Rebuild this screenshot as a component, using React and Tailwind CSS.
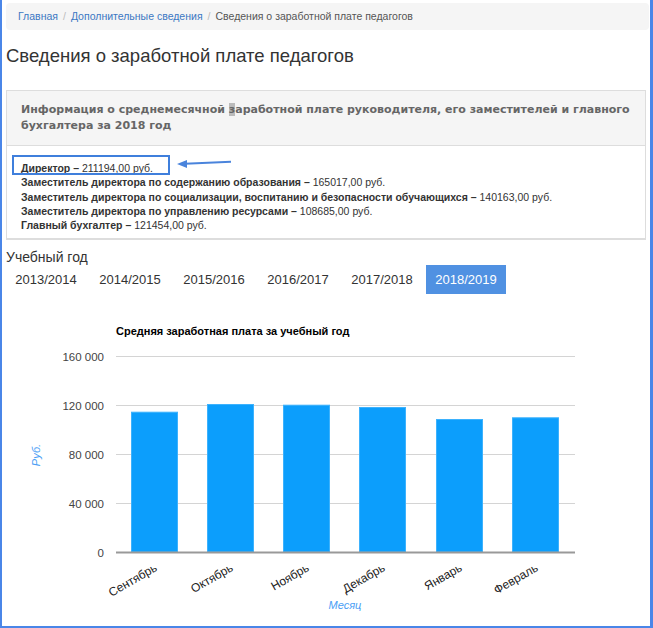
import React from "react";

const staff = [
  ["Директор", "211194,00 руб."],
  ["Заместитель директора по содержанию образования", "165017,00 руб."],
  ["Заместитель директора по социализации, воспитанию и безопасности обучающихся", "140163,00 руб."],
  ["Заместитель директора по управлению ресурсами", "108685,00 руб."],
  ["Главный бухгалтер", "121454,00 руб."],
];

const years = ["2013/2014", "2014/2015", "2015/2016", "2016/2017", "2017/2018", "2018/2019"];

const bars = [
  { month: "Сентябрь", x: 131, top: 411.7 },
  { month: "Октябрь", x: 207, top: 404 },
  { month: "Ноябрь", x: 283, top: 404.7 },
  { month: "Декабрь", x: 359, top: 407 },
  { month: "Январь", x: 436, top: 419 },
  { month: "Февраль", x: 512, top: 417.3 },
];

const ticks = [
  ["160 000", 356.5],
  ["120 000", 405.5],
  ["80 000", 454.5],
  ["40 000", 503.5],
];

function Chart() {
  const font = "'Liberation Sans', Arial, sans-serif";
  return (
    <svg width="648" height="326" viewBox="2 300 648 326" className="block" fontFamily={font}>
      <text x="116" y="335" fontSize="11" fontWeight="bold" fill="#000">
        Средняя заработная плата за учебный год
      </text>
      {ticks.map(([label, y]) => (
        <g key={label}>
          <line x1="116" x2="575" y1={y} y2={y} stroke="#d4d4d4" strokeWidth="1.2" />
          <text x="104" y={y + 4} fontSize="11.5" textAnchor="end" fill="#444">
            {label}
          </text>
        </g>
      ))}
      <text x="104" y="556.5" fontSize="11.5" textAnchor="end" fill="#444">
        0
      </text>
      {bars.map((b) => (
        <rect
          key={b.month}
          x={b.x + 0.5}
          y={b.top + 0.5}
          width="46"
          height={552 - b.top - 0.5}
          fill="#0c9efc"
          stroke="#3db2fd"
          strokeWidth="1"
        />
      ))}
      <line x1="116" x2="575" y1="552.5" y2="552.5" stroke="#999" strokeWidth="2" />
      {bars.map((b) => (
        <text
          key={b.month}
          x={b.x + 27}
          y="570"
          fontSize="12"
          textAnchor="end"
          fill="#222"
          transform={`rotate(-30 ${b.x + 27} 570)`}
        >
          {b.month}
        </text>
      ))}
      <text
        x="40"
        y="455"
        fontSize="11"
        fontStyle="italic"
        textAnchor="middle"
        fill="#4a9ef5"
        transform="rotate(-90 40 455)"
      >
        Руб.
      </text>
      <text x="345" y="609" fontSize="11" fontStyle="italic" textAnchor="middle" fill="#4a9ef5">
        Месяц
      </text>
    </svg>
  );
}

export default function App() {
  return (
    <div
      className="w-[653px] h-[628px] overflow-hidden bg-white border-l-2 border-r-[3px] border-b-2 border-[#4a86e8] text-[#333]"
      style={{ fontFamily: "'Liberation Sans', Arial, sans-serif" }}
    >
      <div className="pl-1 pr-1">
        {/* breadcrumb */}
        <div className="mt-[3px] mr-[-3px] h-[27px] flex items-center px-3 bg-[#f5f5f5] rounded text-[10.5px]">
          <span className="text-[#3c78c3]">Главная</span>
          <span className="px-[5px] text-[#bbb]">/</span>
          <span className="text-[#3c78c3]">Дополнительные сведения</span>
          <span className="px-[5px] text-[#bbb]">/</span>
          <span className="text-[#555]">Сведения о заработной плате педагогов</span>
        </div>

        <h1 className="mt-[14px] mb-[22px] text-[18.5px] leading-[24px] text-[#333]">
          Сведения о заработной плате педагогов
        </h1>

        {/* panel */}
        <div className="border border-[#ddd] border-b-2">
          <div
            className="bg-[#f5f5f5] border-b border-[#ddd] pl-[14px] pr-[4px] pt-[11px] pb-[12px] text-[11px] leading-[15.5px] font-bold text-[#666]"
            style={{ fontFamily: "'DejaVu Sans', Verdana, sans-serif" }}
          >
            Информация о среднемесячной <span className="bg-[#bbb]">з</span>аработной плате руководителя, его
            заместителей и главного бухгалтера за 2018 год
          </div>
          <div className="relative px-[14px] pt-[15px] pb-[6px] text-[10.5px] leading-[14.25px]">
            {staff.map(([role, sum]) => (
              <div key={role}>
                <span className="font-bold">{role} –</span> {sum}
              </div>
            ))}
            <div className="absolute left-[5px] top-[9px] w-[158px] h-[20px] border-2 border-[#3f7fdc]" />
            <svg className="absolute left-0 top-0" width="240" height="30">
              <line x1="224" y1="15.7" x2="178" y2="17.7" stroke="#4a84dc" strokeWidth="2" />
              <polygon points="170,18 180,14 180,22" fill="#4a84dc" />
            </svg>
          </div>
        </div>

        <div className="mt-[9px] text-[14px] leading-[16px]">Учебный год</div>

        <div className="flex gap-[4px] mt-0">
          {years.map((y) => (
            <div
              key={y}
              className={
                y === "2018/2019"
                  ? "w-[80px] h-[29px] flex items-center justify-center text-[13px] bg-[#5091e2] text-white"
                  : "w-[80px] h-[29px] flex items-center justify-center text-[13px] text-[#333]"
              }
            >
              {y}
            </div>
          ))}
        </div>
      </div>
      <div className="mt-[6px]">
        <Chart />
      </div>
    </div>
  );
}
